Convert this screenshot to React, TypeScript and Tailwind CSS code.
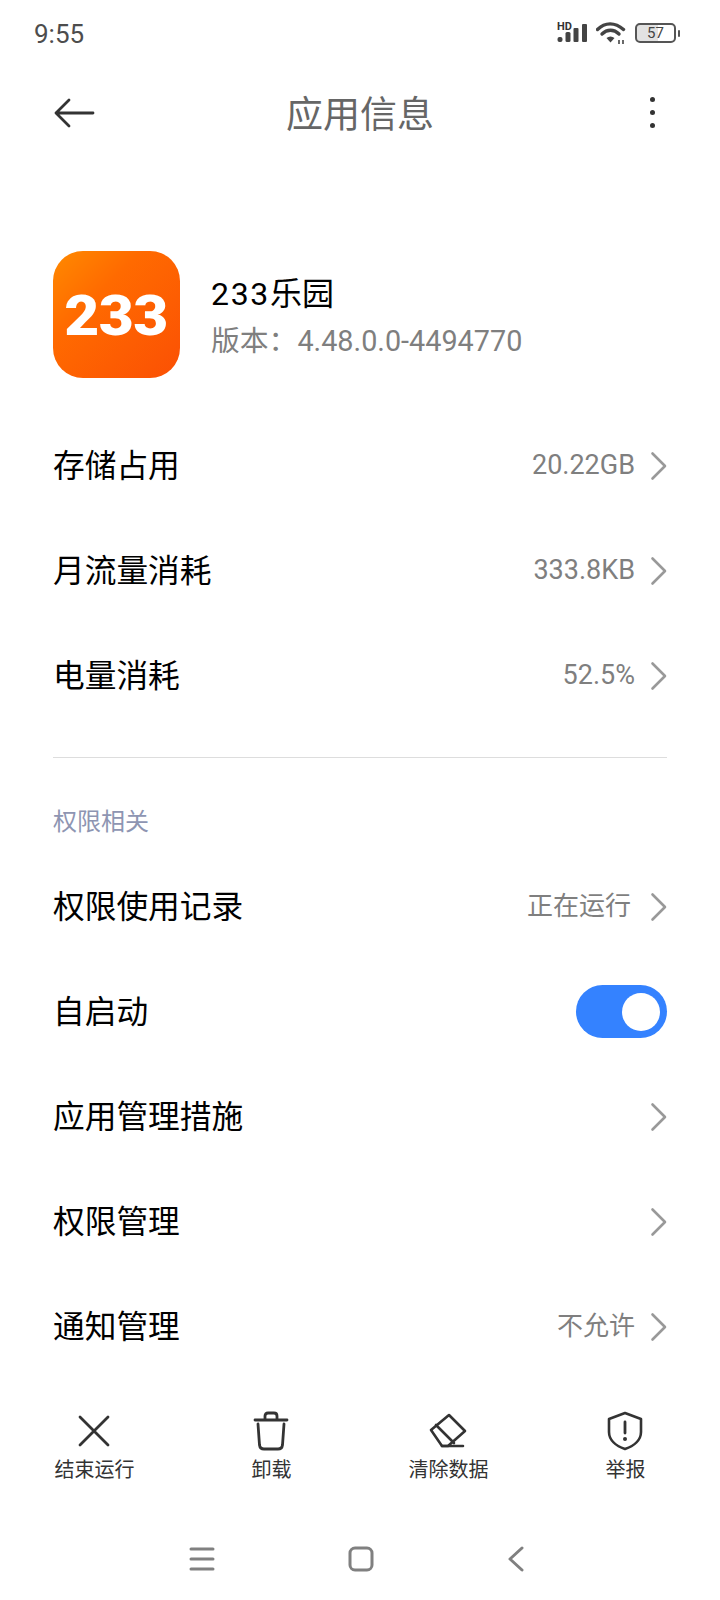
const Chevron = () => (
  <svg width="18" height="30" viewBox="0 0 18 30" fill="none" className="shrink-0">
    <path d="M3.5 2.5 L16 15 L3.5 27.5" stroke="#999999" strokeWidth="2.6" strokeLinecap="round" strokeLinejoin="round" />
  </svg>
);

const Row = ({ title, value, valueClass = "text-[27px]" }: { title: string; value?: string; valueClass?: string }) => (
  <div className="flex h-[105px] items-center justify-between">
    <div className="pt-[2px] text-[31.7px] text-black">{title}</div>
    <div className="flex items-center gap-[14px]">
      {value && <div className={"text-[#7f7f7f] " + valueClass}>{value}</div>}
      <Chevron />
    </div>
  </div>
);

const Action = ({ label, children }: { label: string; children: React.ReactNode }) => (
  <div className="flex flex-col items-center">
    <div className="flex h-[44px] w-[44px] items-center justify-center">{children}</div>
    <div className="ml-[2px] mt-[3px] text-[20px] leading-[28px] text-[#333333]">{label}</div>
  </div>
);

export default function App() {
  return (
    <div className="flex h-[1600px] w-[720px] flex-col overflow-hidden bg-white font-['Roboto','Noto_Sans_CJK_SC',sans-serif]">
      {/* status bar */}
      <div className="flex h-[66px] items-center justify-between pl-[34px] pr-[40px]">
        <div className="pt-[3px] text-[26px] text-[#4d4d4d]">9:55</div>
        <div className="flex items-center">
          <div className="relative h-[30px] w-[36px]">
            <svg width="36" height="30" viewBox="0 0 36 30" className="absolute left-0 top-0">
              <rect x="0.5" y="19" width="5" height="5" rx="2" fill="#444444" />
              <rect x="8.5" y="14" width="5" height="10" rx="1.5" fill="#444444" />
              <rect x="16.5" y="10" width="5" height="14" rx="1" fill="#444444" />
              <rect x="25" y="6" width="5" height="18" rx="1" fill="#444444" />
            </svg>
            <span className="absolute left-0 top-[3px] text-[11px] font-bold leading-[12px] text-[#333333]">HD</span>
          </div>
          <svg width="30" height="24" viewBox="0 0 30 24" fill="none" className="ml-[3px]">
            <path d="M1.5 8.5 C9 1 19 1 27.5 8.5" stroke="#444444" strokeWidth="3.4" strokeLinecap="round" />
            <path d="M6 13 C11 8 18 8 23 13" stroke="#444444" strokeWidth="3.4" strokeLinecap="round" />
            <path d="M10.5 17 C13 15 16 15 18.5 17 L14.5 21.5 Z" fill="#444444" />
            <path d="M23 19 v4 M27 23 v-4" stroke="#444444" strokeWidth="1.6" />
          </svg>
          <div className="relative ml-[9px] flex h-[20px] w-[41px] items-center justify-center rounded-[5px] border-2 border-[#555555] bg-[linear-gradient(90deg,#e2e2e2_57%,#ffffff_57%)] text-[15px] leading-none text-[#444444]">
            57
          </div>
          <div className="ml-[2px] h-[7px] w-[2px] rounded-sm bg-[#555555]" />
        </div>
      </div>

      {/* header */}
      <div className="flex h-[98px] items-center px-[54px]">
        <svg width="42" height="30" viewBox="0 0 42 30" fill="none" className="mb-[4px] shrink-0">
          <path d="M15 2 L2 15 L15 28 M2 15 H39" stroke="#333333" strokeWidth="2.8" strokeLinecap="round" strokeLinejoin="round" />
        </svg>
        <div className="flex-1 pt-[2px] text-center text-[37px] text-[#666666]">应用信息</div>
        <div className="mb-[6px] flex w-[42px] shrink-0 flex-col items-end gap-[8px] pr-[11px]">
          <div className="h-[5px] w-[5px] rounded-full bg-[#333333]" />
          <div className="h-[5px] w-[5px] rounded-full bg-[#333333]" />
          <div className="h-[5px] w-[5px] rounded-full bg-[#333333]" />
        </div>
      </div>

      <div className="flex flex-col px-[53px] pt-[87px]">
        {/* app */}
        <div className="flex items-center">
          <div className="flex h-[127px] w-[127px] items-center justify-center rounded-[30px] bg-[linear-gradient(135deg,#ff8a00_0%,#ff6a00_35%,#fb5004_100%)]">
            <span className="pt-[4px] text-[55px] font-black leading-none tracking-[-0.5px] text-white [transform:scaleX(1.1)]">233</span>
          </div>
          <div className="ml-[31px] flex flex-col pt-[3px]">
            <div className="text-[32px] leading-[44px] text-black"><span className="tracking-[1.7px]">233</span>乐园</div>
            <div className="mt-[5px] text-[28.8px] leading-[40px] text-[#7f7f7f]">版本：4.48.0.0-4494770</div>
          </div>
        </div>

        <div className="mt-[35px]">
          <Row title="存储占用" value="20.22GB" />
          <Row title="月流量消耗" value="333.8KB" />
          <Row title="电量消耗" value="52.5%" />
        </div>

        <div className="mt-[29px] h-[1px] bg-[#dddddd]" />

        <div className="mt-[49px] text-[24px] leading-[30px] text-[#8e95b2]">权限相关</div>

        <div className="mt-[17px]">
          <Row title="权限使用记录" value="正在运行" valueClass="pr-[4px] text-[26px]" />
          <div className="flex h-[105px] items-center justify-between">
            <div className="pt-[2px] text-[31.7px] text-black">自启动</div>
            <div className="flex h-[53px] w-[91px] items-center justify-end rounded-full bg-[#3482ff] pr-[7px]">
              <div className="h-[38px] w-[38px] rounded-full bg-white" />
            </div>
          </div>
          <Row title="应用管理措施" />
          <Row title="权限管理" />
          <Row title="通知管理" value="不允许" valueClass="text-[26px]" />
        </div>
      </div>

      {/* actions */}
      <div className="mt-[30px] grid grid-cols-4 pl-[5px] pr-[7px]">
        <Action label="结束运行">
          <svg width="34" height="34" viewBox="0 0 34 34" fill="none">
            <path d="M3 3 L31 31 M31 3 L3 31" stroke="#333333" strokeWidth="2.8" strokeLinecap="round" />
          </svg>
        </Action>
        <Action label="卸载">
          <svg width="36" height="40" viewBox="0 0 36 40" fill="none">
            <path d="M2 9 H34 M12 8 V5 Q12 2 15 2 H21 Q24 2 24 5 V8" stroke="#333333" strokeWidth="2.8" strokeLinecap="round" />
            <path d="M5 13 L6.5 34 Q7 38 11 38 H25 Q29 38 29.5 34 L31 13" stroke="#333333" strokeWidth="2.8" strokeLinecap="round" />
          </svg>
        </Action>
        <Action label="清除数据">
          <svg width="38" height="36" viewBox="0 0 38 36" fill="none">
            <path d="M2 17 L20 2 L36 18 L19 33 H13 Z" stroke="#333333" strokeWidth="2.6" strokeLinejoin="round" />
            <path d="M7 12 L25 30 M13 33 H34" stroke="#333333" strokeWidth="2.6" strokeLinecap="round" />
          </svg>
        </Action>
        <Action label="举报">
          <svg width="36" height="40" viewBox="0 0 36 40" fill="none">
            <path d="M18 2 L34 8 V21 C34 29 27 35 18 38 C9 35 2 29 2 21 V8 Z" stroke="#333333" strokeWidth="2.6" strokeLinejoin="round" />
            <path d="M18 11 V22" stroke="#333333" strokeWidth="2.8" strokeLinecap="round" />
            <circle cx="18" cy="28" r="2" fill="#333333" />
          </svg>
        </Action>
      </div>

      {/* nav */}
      <div className="mt-auto flex h-[84px] items-start justify-between pl-[189px] pr-[195px] pt-[30px]">
        <svg width="26" height="26" viewBox="0 0 26 26" fill="none">
          <path d="M2 3 H24 M2 13 H24 M2 23 H24" stroke="#808080" strokeWidth="3" strokeLinecap="round" />
        </svg>
        <svg width="26" height="26" viewBox="0 0 26 26" fill="none">
          <rect x="2" y="2" width="22" height="22" rx="5" stroke="#808080" strokeWidth="3" />
        </svg>
        <svg width="18" height="26" viewBox="0 0 18 26" fill="none">
          <path d="M15 2 L3 13 L15 24" stroke="#808080" strokeWidth="3" strokeLinecap="round" strokeLinejoin="round" />
        </svg>
      </div>
    </div>
  );
}
